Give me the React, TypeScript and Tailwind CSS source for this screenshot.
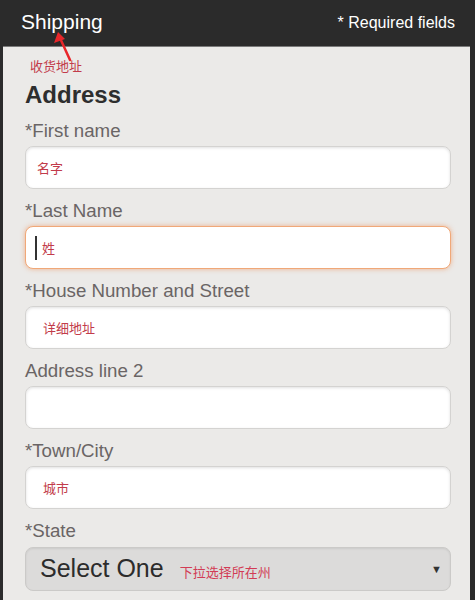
import React from 'react';

type Field = {
  label: string;
  hint?: string;
  hintPad?: string;
  focused?: boolean;
};

const fields: Field[] = [
  { label: '*First name', hint: '名字', hintPad: 'pl-[11px]' },
  { label: '*Last Name', hint: '姓', hintPad: 'pl-[16px]', focused: true },
  { label: '*House Number and Street', hint: '详细地址', hintPad: 'pl-[17px]' },
  { label: 'Address line 2' },
  { label: '*Town/City', hint: '城市', hintPad: 'pl-[17px]' },
];

const cjk = "font-['Noto_Sans_CJK_SC',sans-serif]";

function FieldRow({ field }: { field: Field }) {
  return (
    <div className="mb-[11px]">
      <div className="h-[22px] text-[18.7px] leading-[22px] text-[#6a6565]">{field.label}</div>
      <div
        className={
          field.focused
            ? 'mt-[4px] h-[43px] rounded-[8px] bg-white border border-[#f0a878] shadow-[0_0_5px_rgba(240,140,80,0.6)] flex items-center'
            : 'mt-[4px] h-[43px] rounded-[8px] bg-white border border-[#d4d3d1] shadow-[inset_0_1px_3px_rgba(0,0,0,0.12)] flex items-center'
        }
      >
        {field.focused && <span className="ml-[9px] w-[2px] h-[24px] bg-[#333]" />}
        {field.hint && (
          <span className={`${field.focused ? 'pl-[5px]' : field.hintPad} text-[13px] text-[#c23b4a] ${cjk}`}>
            {field.hint}
          </span>
        )}
      </div>
    </div>
  );
}

export default function App() {
  return (
    <div className="relative w-[475px] h-[600px] overflow-hidden bg-[#2b2b2b] pl-[3px] pr-[5px] font-['Liberation_Sans',Arial,sans-serif]">
      {/* Header */}
      <div className="h-[47px] flex items-center justify-between pl-[18px] pr-[15px] border-b border-[#7a7a7a]">
        <span className="text-[21px] text-white -mt-[2px]">Shipping</span>
        <span className="text-[16px] text-white">* Required fields</span>
      </div>

      {/* Form body */}
      <div className="h-[560px] bg-[#ebeae8] pl-[22px] pr-[19px] pt-[10px]">
        <div className={`h-[18px] leading-[18px] pl-[5px] text-[13px] text-[#c23b4a] ${cjk}`}>收货地址</div>
        <div className="mt-[6px] h-[28px] leading-[28px] text-[24px] font-bold text-[#2e2e2e]">Address</div>
        <div className="mt-[11px]">
          {fields.map((f) => (
            <FieldRow key={f.label} field={f} />
          ))}
          <div>
            <div className="h-[22px] text-[18.7px] leading-[22px] text-[#6a6565]">*State</div>
            <div className="mt-[5px] h-[44px] rounded-[8px] bg-[#dcdbda] border border-[#cbcac8] shadow-[inset_0_1px_2px_rgba(0,0,0,0.08)] flex items-center pl-[14px] pr-[8px]">
              <span className="text-[25px] text-[#2c2c2c]">Select One</span>
              <span className={`ml-[16px] mt-[6px] text-[13px] text-[#d23b55] ${cjk}`}>下拉选择所在州</span>
              <span className="ml-auto text-[11px] text-[#333]">▼</span>
            </div>
          </div>
        </div>
      </div>

      {/* Annotation arrow */}
      <svg className="absolute left-[50px] top-[28px]" width="30" height="36" viewBox="0 0 30 36">
        <path d="M20 32 L10 10" stroke="#e8262a" strokeWidth="2.5" strokeLinecap="round" />
        <path d="M8 4 L4 15 L15 11 Z" fill="#e8262a" />
      </svg>
    </div>
  );
}
